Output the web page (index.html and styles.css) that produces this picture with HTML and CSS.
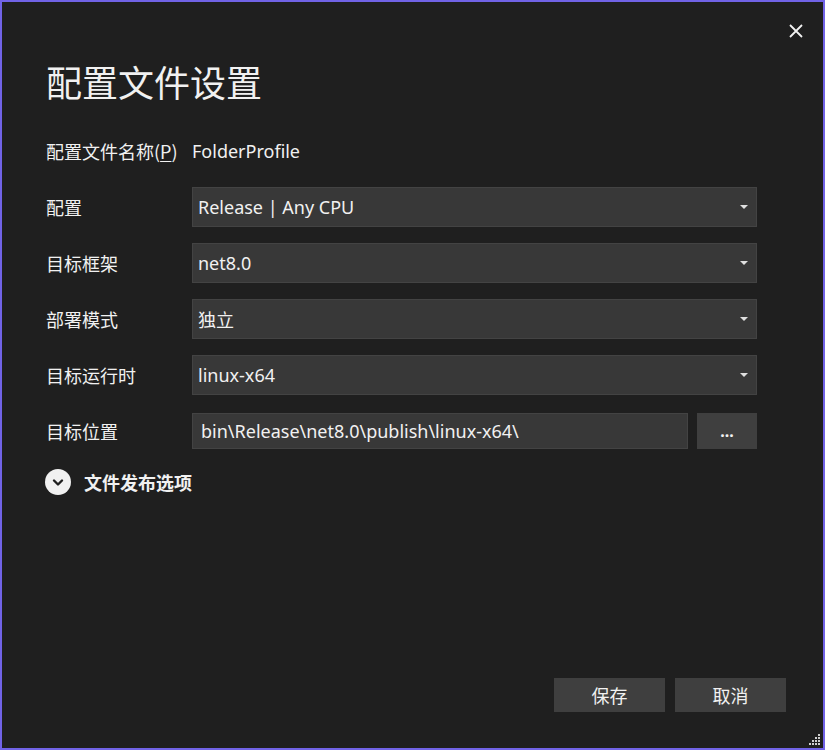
FILE: index.html
```html
<!DOCTYPE html>
<html lang="zh-CN">
<head>
<meta charset="utf-8">
<title>配置文件设置</title>
<link rel="stylesheet" href="styles.css">
</head>
<body>
<div class="dialog">
  <div class="topbar">
    <button class="close" aria-label="关闭">
      <svg width="14" height="14" viewBox="0 0 14 14"><path d="M1 1L13 13M13 1L1 13" stroke="#f1f1f1" stroke-width="1.8" fill="none"/></svg>
    </button>
  </div>
  <h1 class="title">配置文件设置</h1>
  <div class="form">
    <div class="label">配置文件名称(<u>P</u>)</div>
    <div class="value">FolderProfile</div>

    <div class="label">配置</div>
    <div class="select"><span>Release | Any CPU</span><i class="arrow"></i></div>

    <div class="label">目标框架</div>
    <div class="select"><span>net8.0</span><i class="arrow"></i></div>

    <div class="label">部署模式</div>
    <div class="select"><span>独立</span><i class="arrow"></i></div>

    <div class="label">目标运行时</div>
    <div class="select"><span>linux-x64</span><i class="arrow"></i></div>

    <div class="label">目标位置</div>
    <div class="pathrow">
      <div class="input">bin\Release\net8.0\publish\linux-x64\</div>
      <button class="browse">...</button>
    </div>
  </div>
  <div class="expander">
    <span class="chev">
      <svg width="26" height="26" viewBox="0 0 26 26"><circle cx="13" cy="13" r="13" fill="#f1f1f1"/><path d="M9 11.5L13 15.5L17 11.5" stroke="#1f1f1f" stroke-width="2.4" fill="none" stroke-linecap="round" stroke-linejoin="round"/></svg>
    </span>
    <span class="exp-label">文件发布选项</span>
  </div>
  <div class="spacer"></div>
  <div class="footer">
    <button class="btn">保存</button>
    <button class="btn">取消</button>
  </div>
  <svg class="grip" width="12" height="12" viewBox="0 0 12 12" fill="#cfcfcf">
    <rect x="9" y="0" width="2" height="2"/>
    <rect x="6" y="3" width="2" height="2"/><rect x="9" y="3" width="2" height="2"/>
    <rect x="3" y="6" width="2" height="2"/><rect x="6" y="6" width="2" height="2"/><rect x="9" y="6" width="2" height="2"/>
    <rect x="0" y="9" width="2" height="2"/><rect x="3" y="9" width="2" height="2"/><rect x="6" y="9" width="2" height="2"/><rect x="9" y="9" width="2" height="2"/>
  </svg>
</div>
</body>
</html>
```

FILE: styles.css
```css
* { box-sizing: border-box; }
html, body { margin: 0; padding: 0; background: #1f1f1f; }
body {
  font-family: "Noto Sans", "Noto Sans CJK SC", sans-serif;
  color: #f1f1f1;
}
.dialog {
  position: relative;
  width: 825px;
  height: 750px;
  border: 2px solid #7163e6;
  background: #1f1f1f;
  display: flex;
  flex-direction: column;
  padding: 0 66px 36px 44px;
}
.topbar {
  height: 55px;
  position: relative;
}
.close {
  position: absolute;
  right: -49px;
  top: 19px;
  width: 20px;
  height: 20px;
  padding: 0;
  border: 0;
  background: transparent;
  display: flex;
  align-items: center;
  justify-content: center;
}
.title {
  margin: 0;
  font-family: "Noto Sans CJK SC", sans-serif;
  font-weight: 400;
  font-size: 36px;
  line-height: 48px;
  letter-spacing: 0;
}
.form {
  margin-top: 26px;
  display: grid;
  grid-template-columns: 146px 1fr;
  grid-auto-rows: 40px;
  row-gap: 16px;
  align-items: center;
  font-size: 18px;
}
.label {
  font-family: "Noto Sans CJK SC", sans-serif;
  font-size: 18px;
}
.label u { text-underline-offset: 2px; }
.value { font-size: 18px; }
.select {
  height: 40px;
  background: #383838;
  border: 1px solid #434343;
  display: flex;
  align-items: center;
  padding: 0 8px 0 5px;
}
.select span { flex: 1; font-size: 18px; }
.arrow {
  width: 0; height: 0;
  border-left: 4.5px solid transparent;
  border-right: 4.5px solid transparent;
  border-top: 4.5px solid #e0e0e0;
}
.pathrow {
  display: flex;
  gap: 9px;
  height: 36px;
}
.input {
  flex: 1;
  background: #383838;
  border: 1px solid #434343;
  display: flex;
  align-items: center;
  padding-left: 8px;
  font-size: 18px;
}
.browse {
  width: 60px;
  background: #3f3f3f;
  border: 0;
  color: #f1f1f1;
  font-family: "Noto Sans", sans-serif;
  font-size: 16px;
  font-weight: 700;
  padding: 0;
}
.expander {
  margin-top: 18px;
  display: flex;
  align-items: center;
  height: 26px;
}
.chev { display: flex; width: 26px; height: 26px; margin-left: -1px; }
.exp-label {
  margin-left: 13px;
  font-family: "Noto Sans CJK SC", sans-serif;
  font-weight: 700;
  font-size: 18px;
}
.spacer { flex: 1; }
.footer {
  display: flex;
  justify-content: flex-end;
  gap: 10px;
  margin-right: -29px;
}
.btn {
  width: 111px;
  height: 34px;
  background: #3f3f3f;
  border: 0;
  color: #f1f1f1;
  font-family: "Noto Sans CJK SC", sans-serif;
  font-size: 18px;
  padding: 0;
}
.grip {
  position: absolute;
  right: 2px;
  bottom: 2px;
}
```
